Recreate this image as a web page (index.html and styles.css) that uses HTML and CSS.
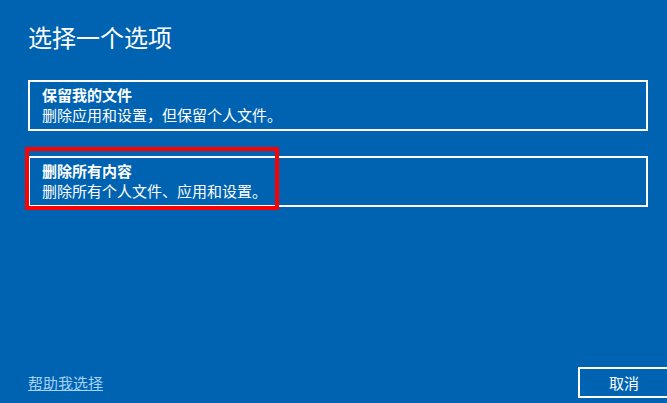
FILE: index.html
```html
<!DOCTYPE html>
<html lang="zh-CN">
<head>
<meta charset="utf-8">
<title>选择一个选项</title>
<link rel="stylesheet" href="styles.css">
</head>
<body>
<div class="page">
  <h1 class="title">选择一个选项</h1>
  <div class="options">
    <div class="option">
      <div class="opt-title">保留我的文件</div>
      <div class="opt-desc">删除应用和设置，但保留个人文件。</div>
    </div>
    <div class="option">
      <div class="opt-title">删除所有内容</div>
      <div class="opt-desc">删除所有个人文件、应用和设置。</div>
      <div class="highlight"></div>
    </div>
  </div>
  <div class="footer">
    <a class="help" href="#">帮助我选择</a>
    <button class="cancel">取消</button>
  </div>
</div>
</body>
</html>
```
FILE: styles.css
```css
html, body {
  margin: 0;
  padding: 0;
  height: 100%;
}
body {
  background: #0063b1;
  color: #ffffff;
  font-family: "Noto Sans CJK SC", "Noto Sans", sans-serif;
  overflow: hidden;
}
.page {
  height: 403px;
  box-sizing: border-box;
  padding: 21px 19px 5px 28px;
  display: flex;
  flex-direction: column;
}
.title {
  margin: 0;
  font-size: 24px;
  line-height: 32px;
  font-weight: normal;
}
.options {
  margin-top: 27px;
  display: flex;
  flex-direction: column;
  gap: 25px;
}
.option {
  position: relative;
  border: 2px solid #ffffff;
  padding: 3px 12px 4px 12px;
  font-size: 15px;
  line-height: 20px;
}
.opt-title {
  font-weight: bold;
}
.highlight {
  position: absolute;
  left: -5px;
  top: -11px;
  width: 254px;
  height: 63px;
  box-sizing: border-box;
  border: 4px solid #ff0000;
  pointer-events: none;
}
.footer {
  margin-top: auto;
  display: flex;
  justify-content: space-between;
  align-items: center;
  margin-right: -22px;
}
.help {
  color: #a6d2f5;
  font-size: 15px;
  line-height: 20px;
  text-decoration: underline;
}
.cancel {
  width: 92px;
  height: 31px;
  background: transparent;
  border: 2px solid #ffffff;
  color: #ffffff;
  font-family: "Noto Sans CJK SC", "Noto Sans", sans-serif;
  font-size: 15px;
  padding: 0;
}
```
